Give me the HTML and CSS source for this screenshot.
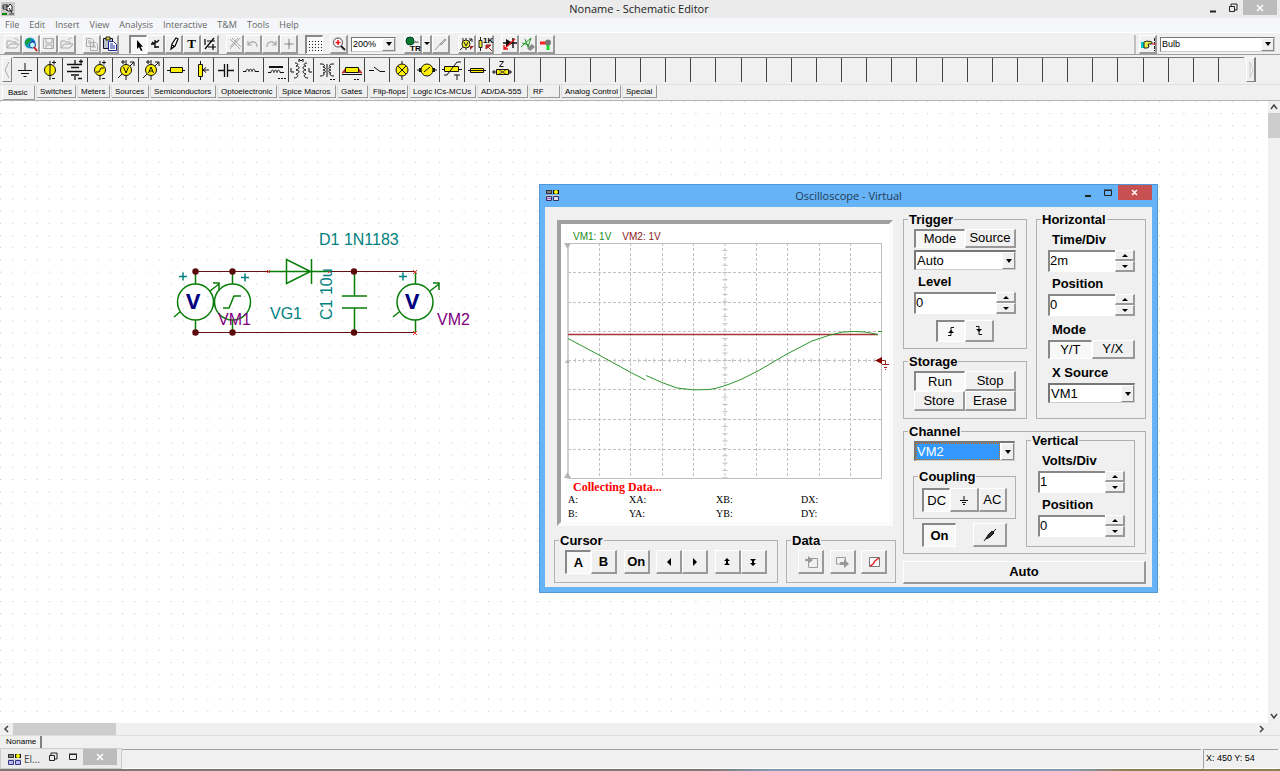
FILE: index.html
```html
<!DOCTYPE html>
<html lang="en">
<head>
<meta charset="utf-8">
<title>Noname - Schematic Editor</title>
<link rel="stylesheet" href="styles.css">
</head>
<body>
<header class="titlebar">
  <svg class="app-icon" width="14" height="14" viewBox="0 0 14 14"><rect width="14" height="14" fill="#c8c8c8"/><path d="M2 3h3l2 2 2-3 2 2v5H7L5 7H2z" fill="#fff" stroke="#222"/><path d="M6 2v7M2 5h4M8 6l3 5" stroke="#222"/><path d="M1 12h5" stroke="#080" stroke-width="2"/><path d="M8 12h5" stroke="#333"/></svg>
  <h1>Noname - Schematic Editor</h1>
  <div class="caption-buttons">
    <button aria-label="Minimize"><svg width="10" height="10"><path d="M2 8.500h6" stroke="#222" stroke-width="2"/></svg></button>
    <button aria-label="Restore"><svg width="10" height="10"><path d="M3 3V1h6v6H7M1.500 3.500h5v5h-5z" fill="none" stroke="#222"/></svg></button>
    <button class="close" aria-label="Close"><svg width="10" height="10"><path d="M2 2l6 6M8 2l-6 6" stroke="#fff" stroke-width="1.500"/></svg></button>
  </div>
</header>
<nav class="menu">
  <button>File</button><button>Edit</button><button>Insert</button><button>View</button><button>Analysis</button><button>Interactive</button><button>T&amp;M</button><button>Tools</button><button>Help</button>
</nav>
<div class="toolbar">
  <div class="group">
    <button aria-label="Open"><svg viewBox="0 0 18 18"><path d="M3 13V6h4l1 1h4v2M3 13l3-4h9l-3 4zM10 4c2-1 3-1 4 2" fill="none" stroke="#aaa"/></svg></button>
    <button aria-label="Open from web"><svg viewBox="0 0 18 18"><circle cx="8" cy="8" r="5.500" fill="#18a0c8"/><path d="M4 5l4-2 1 3-3 2-1 3-2-3z" fill="#16a030"/><path d="M9 4l4 3-2 3z" fill="#2040c0"/><circle cx="10.500" cy="10" r="3" fill="#bff" stroke="#123a9a"/><path d="M12 12l3 4" stroke="#c22" stroke-width="2"/></svg></button>
    <button aria-label="Save"><svg viewBox="0 0 18 18"><path d="M3.500 3.500h10v10h-10zM6 4v4h6V4M6 13v-3h6v3" fill="none" stroke="#aaa"/></svg></button>
    <button aria-label="Close file"><svg viewBox="0 0 18 18"><path d="M3 13V6h4l1 1h4v2M3 13l3-4h9l-3 4zM10 5c2-3 3-1 4-2" fill="none" stroke="#aaa"/></svg></button>
  </div>
  <div class="group">
    <button aria-label="Copy"><svg viewBox="0 0 18 18"><path d="M3.500 3.500h5l2 2v6h-7zM7.500 7.500h5l2 2v6h-7zM5 6h3M5 8h2M9 10h3M9 12h4" fill="none" stroke="#aaa"/></svg></button>
    <button aria-label="Paste"><svg viewBox="0 0 18 18"><path d="M2.500 3.500h9v10h-9z" fill="#b8c0c8" stroke="#112"/><path d="M5 2h4v3H5z" fill="#dd3" stroke="#222"/><path d="M7.500 6.500h5l3 3v6h-8z" fill="#fff" stroke="#1a2a9a"/><path d="M9 9h3M9 11h5M9 13h5" stroke="#1a2a9a"/></svg></button>
  </div>
  <div class="group tools">
    <button class="pressed" aria-label="Select"><svg viewBox="0 0 18 18"><path d="M7 4v9l2-2 2 4 1.500-.7-2-3.500H13z"/></svg></button>
    <button aria-label="Wire node"><svg viewBox="0 0 18 18"><path d="M8 5v8M4 9h3M8 7h2l2-2M8 12h4M5 7l3 2" fill="none" stroke="#000" stroke-width="1.300"/></svg></button>
    <button aria-label="Draw wire"><svg viewBox="0 0 18 18"><path d="M6 14l1-5 4-6 2 1-3 7zM7 10l2 1" fill="#fff" stroke="#000" stroke-width="1.200"/></svg></button>
    <button aria-label="Text"><b class="glyph">T</b></button>
    <button aria-label="Hide values"><svg viewBox="0 0 18 18"><path d="M4 14L13 3M4 4v6M6 6h8M7 12h8M12 9v6" fill="none" stroke="#000" stroke-width="1.200"/></svg></button>
  </div>
  <div class="group">
    <button aria-label="Delete"><svg viewBox="0 0 18 18"><path d="M4 4l10 10M6 3l9 9M14 3L4 14M12 3l-8 9" stroke="#aaa"/></svg></button>
    <button aria-label="Undo"><svg viewBox="0 0 18 18"><path d="M4 6v4h4M4 10c3-5 9-4 9 2" fill="none" stroke="#aaa" stroke-width="1.200"/></svg></button>
    <button aria-label="Redo"><svg viewBox="0 0 18 18"><path d="M14 6v4h-4M14 10c-3-5-9-4-9 2" fill="none" stroke="#aaa" stroke-width="1.200"/></svg></button>
    <button aria-label="Move"><svg viewBox="0 0 18 18"><path d="M9 4v10M4 9h10" stroke="#999" stroke-width="1.200"/><circle cx="9" cy="9" r="1.600" fill="#999"/></svg></button>
  </div>
  <div class="group">
    <button class="pressed" aria-label="Grid"><svg viewBox="0 0 18 18"><path d="M3 5.500h13M3 8.500h13M3 11.500h13M3 14.500h13" stroke="#222" stroke-dasharray="1 2"/></svg></button>
  </div>
  <div class="group">
    <button aria-label="Zoom"><svg viewBox="0 0 18 18"><circle cx="8" cy="7.500" r="4.500" fill="#fff" stroke="#444"/><path d="M5.500 7.500h5M8 5v5" stroke="#e11" stroke-width="1.500"/><path d="M11 11l4 4" stroke="#222" stroke-width="2"/></svg></button>
    <div class="combo zoom-level"><select aria-label="Zoom level"><option>200%</option></select><span class="drop"></span></div>
  </div>
  <div class="group runs">
    <button aria-label="Transient"><svg viewBox="0 0 18 18"><circle cx="6" cy="6" r="4" fill="#0a7a2a" stroke="#043"/><path d="M10 8c1-2 2-2 2 0 1-2 2-2 2 0" fill="none" stroke="#555"/><text x="6" y="16" class="tiny">TR</text></svg></button>
    <button class="slim" aria-label="Run options"><span class="tri"></span></button>
    <button aria-label="Probe"><svg viewBox="0 0 18 18"><path d="M3 15l5-6M8 9l5-5 1 1-5 5z" fill="#ccc" stroke="#999"/></svg></button>
  </div>
  <div class="group runs">
    <button aria-label="Meter"><svg viewBox="0 0 18 18"><path d="M2 15L14 4M11 4h3v3M8 3v12M5 3v3" fill="none" stroke="#222"/><circle cx="8" cy="9" r="4" fill="#ee3" stroke="#222"/><path d="M6 7l2 4 2-4" fill="none" stroke="#222"/><path d="M12 11h4l-4 4z" fill="#a22"/></svg></button>
    <button aria-label="Component value"><svg viewBox="0 0 18 18"><path d="M4.500 2v14" stroke="#222"/><path d="M3 5.500h3v7H3z" fill="#ee3" stroke="#222"/><text x="7" y="8" class="tiny">1K</text><path d="M10 10h5l-5 4zM12 12l4 4" fill="#a22" stroke="#a22"/></svg></button>
  </div>
  <div class="group">
    <button aria-label="Diode tool"><svg viewBox="0 0 18 18"><path d="M2 8h14M12 3v10" stroke="#111" stroke-width="1.500"/><path d="M5 4l7 4-7 4z" fill="#111"/><path d="M14 4L3 14M3 10v4h4" stroke="#e11" fill="none" stroke-width="1.300"/></svg></button>
    <button aria-label="Check"><svg viewBox="0 0 18 18"><path d="M2 12l10-9M3 8l7 2M6 4l3 8M12 3l-3 9" stroke="#292"/><path d="M8 13l5-4 3 3-5 4z" fill="#888"/></svg></button>
    <button aria-label="Pin"><svg viewBox="0 0 18 18"><path d="M3 8h6" stroke="#f22" stroke-width="3"/><path d="M11 9v6" stroke="#1d2" stroke-width="3"/><circle cx="11" cy="7.500" r="3" fill="#777"/></svg></button>
  </div>
  <div class="group find">
    <button aria-label="Find component"><svg viewBox="0 0 18 18"><path d="M2 7h3v6H2z" fill="#0cc"/><path d="M5 7l3-1 5 1v2H9l1 3-2 1H5z" fill="#ee4" stroke="#222"/><path d="M15.500 3v13" stroke="#222" stroke-dasharray="3 1"/><path d="M13 9h4" stroke="#e22"/></svg></button>
    <div class="combo part-name"><select aria-label="Component"><option>Bulb</option></select><span class="drop"></span></div>
  </div>
</div>
<div class="palette">
  <button class="arrow" aria-label="Scroll left"><svg width="8" height="24"><path d="M6 4L2 12l4 8" fill="none" stroke="#aaa"/></svg></button>
  <div class="cells">
    <button aria-label="Ground"><svg viewBox="0 0 24 24"><path d="M12 5v7M5 12.500h14M8 15.500h8M10.500 18.500h3" stroke="#111" fill="none"/></svg></button>
    <button aria-label="Battery source"><svg viewBox="0 0 24 24"><path d="M12 3v19M14 4.500h4M16 2.500v4M14 20.500h3" stroke="#111"/><circle cx="12" cy="12" r="5.500" fill="#ffef00" stroke="#111"/><path d="M12 6v12" stroke="#111"/></svg></button>
    <button aria-label="Battery"><svg viewBox="0 0 24 24"><path d="M12 2v4M12 18v4M4 6.500h15M8 9.500h8M4 13.500h15M8 17h8M15 20.500h4M16 3.500h4M18 1.500v4" stroke="#111" stroke-width="1.300"/></svg></button>
    <button aria-label="Voltage generator"><svg viewBox="0 0 24 24"><path d="M12 3v19M14 4.500h4M16 2.500v4M14 20.500h3" stroke="#111"/><circle cx="12" cy="12" r="5.500" fill="#ffef00" stroke="#111"/><path d="M8 14h3l2-4h3" stroke="#111" fill="none"/></svg></button>
    <button aria-label="Voltmeter"><svg viewBox="0 0 24 24"><path d="M12 2v20M4 20L20 4M16 4h4v4M7 4h4M9 2v4" stroke="#111" fill="none"/><circle cx="12" cy="12" r="5.500" fill="#ffef00" stroke="#111"/><path d="M9.500 9l2.500 6 2.500-6" stroke="#111" fill="none"/></svg></button>
    <button aria-label="Ammeter"><svg viewBox="0 0 24 24"><path d="M12 2v20M4 20L20 4M16 4h4v4M7 4h4M9 2v4" stroke="#111" fill="none"/><circle cx="12" cy="12" r="5.500" fill="#ffef00" stroke="#111"/><path d="M9.500 15l2.500-6 2.500 6M10 13h4" stroke="#111" fill="none"/></svg></button>
    <button aria-label="Resistor"><svg viewBox="0 0 24 24"><path d="M3 12.500h18" stroke="#111"/><path d="M6.500 9.500h12v5h-12z" fill="#ffef00" stroke="#111"/></svg></button>
    <button aria-label="Potentiometer"><svg viewBox="0 0 24 24"><path d="M11.500 3v19M14 12h6M17 9.500l-3 2.500 3 2.500" stroke="#111" fill="none"/><path d="M9.500 6.500h4v12h-4z" fill="#ffef00" stroke="#111"/></svg></button>
    <button aria-label="Capacitor"><svg viewBox="0 0 24 24"><path d="M4 12.500h6M14 12.500h6M10.500 6v13M13.500 6v13" stroke="#111" stroke-width="1.300"/></svg></button>
    <button aria-label="Inductor"><svg viewBox="0 0 24 24"><path d="M4 13.500h3c0-3 3-3 3 0 0-3 3-3 3 0 0-3 3-3 3 0h4" stroke="#111" fill="none"/></svg></button>
    <button aria-label="Core inductor"><svg viewBox="0 0 24 24"><path d="M5 9h14" stroke="#111" stroke-width="2"/><path d="M4 14.500h3c0-3 3-3 3 0 0-3 3-3 3 0 0-3 3-3 3 0h4M14 20.500h2M17 20.500h2M20 20.500h2" stroke="#111" fill="none"/></svg></button>
    <button aria-label="Coupled inductors"><svg viewBox="0 0 24 24"><path d="M6 5c3 0 4 2 1 3 4 0 4 3 0 4 4 0 4 3 0 4 3 1 2 4-2 4M18 5c-3 0-4 2-1 3-4 0-4 3 0 4-4 0-4 3 0 4-3 1-2 4 2 4M2 10v4h3M20 10v4h3M10 4V1l2 2 2-2v3" stroke="#111" fill="none"/></svg></button>
    <button aria-label="Transformer"><svg viewBox="0 0 24 24"><path d="M5 6h2c3 0 3 3 1 3 3 0 3 3 0 3 3 0 3 3 0 3 2 0 2 3-3 3M19 6h-2c-3 0-3 3-1 3-3 0-3 3 0 3-3 0-3 3 0 3-2 0-2 3 3 3M12 6v13M15 21.500h2M18 21.500h2" stroke="#111" fill="none"/></svg></button>
    <button aria-label="Line"><svg viewBox="0 0 24 24"><path d="M2 15l4-5v4zM22 15l-4-5v4z" fill="#c22" stroke="#c22"/><path d="M5.500 9.500h13v5h-13z" fill="#ffef00" stroke="#111"/><path d="M2 16.500h20M14 21.500h2M17 21.500h2" stroke="#111"/></svg></button>
    <button aria-label="Switch"><svg viewBox="0 0 24 24"><path d="M4 12.500h5M9 9l6 4.500h5" stroke="#111" fill="none"/></svg></button>
    <button aria-label="Lamp"><svg viewBox="0 0 24 24"><path d="M12 3v19" stroke="#111"/><circle cx="12" cy="12" r="6" fill="#ffef00" stroke="#111"/><path d="M8 8l8 8M16 8l-8 8" stroke="#111"/></svg></button>
    <button aria-label="Motor"><svg viewBox="0 0 24 24"><path d="M2 12h20" stroke="#111"/><path d="M4 10h16v4H4z" fill="#111"/><circle cx="12" cy="12" r="6" fill="#ffef00" stroke="#111"/><path d="M9 14l6-5" stroke="#111"/></svg></button>
    <button aria-label="Thermistor"><svg viewBox="0 0 24 24"><path d="M2 11.500h20" stroke="#111"/><path d="M4.500 8.500h14v5h-14z" fill="#ffef00" stroke="#111"/><path d="M4 17h3L17 4h4M14 17h6M17 17v5" stroke="#111" fill="none"/></svg></button>
    <button aria-label="Fuse"><svg viewBox="0 0 24 24"><path d="M5.500 10.500h13v4h-13z" fill="#ffef00" stroke="#111"/><path d="M3 12.500h18" stroke="#111"/></svg></button>
    <button aria-label="Impedance"><svg viewBox="0 0 24 24"><path d="M9.500 3.500h4l-4 5h4" stroke="#111" fill="none"/><path d="M2 14h20M4 12v4M20 12v4" stroke="#111"/><path d="M6.500 11.500h12v5h-12z" fill="#ffef00" stroke="#111"/><path d="M9 12l7 4M16 12l-7 4" stroke="#553"/></svg></button>
    <i></i><i></i><i></i><i></i><i></i><i></i><i></i><i></i><i></i><i></i><i></i><i></i><i></i><i></i><i></i><i></i><i></i><i></i><i></i><i></i><i></i><i></i><i></i><i></i><i></i><i></i><i></i><i></i><i></i>
  </div>
  <button class="arrow right" aria-label="Scroll right"><svg width="8" height="24"><path d="M3 4v16l3-8z" fill="none" stroke="#ccc"/></svg></button>
</div>
<div class="tabs">
  <button class="current">Basic</button><button>Switches</button><button>Meters</button><button>Sources</button><button>Semiconductors</button><button>Optoelectronic</button><button>Spice Macros</button><button>Gates</button><button>Flip-flops</button><button>Logic ICs-MCUs</button><button>AD/DA-555</button><button>RF</button><button>Analog Control</button><button>Special</button>
</div>
<main class="workspace">
  <div class="canvas">
    <svg class="schematic" width="100%" height="100%">
      <defs><pattern id="dots" x="0" y="12" width="12.200" height="12.200" patternUnits="userSpaceOnUse"><rect width="1" height="1" fill="#c4c4c4"/></pattern></defs>
      <rect width="100%" height="100%" fill="url(#dots)"/>
      <g transform="translate(0 -101)">
        <path d="M195 271.500h73M331 271.500h84M195 332.500h220" stroke="#611"/>
        <g fill="none" stroke="#087d08" stroke-width="1.500">
          <path d="M268 271.500h63M286.500 259.500v24l24-12zM311.500 259v25"/>
          <path d="M195.500 271v13M195.500 320v12M232.500 271v13M232.500 320v12M415.500 271v13M415.500 320v12M354.500 271v25M354.500 308v24M342 296h25M342 308h25"/>
          <circle cx="195.500" cy="302" r="18"/><circle cx="232.500" cy="302" r="18"/><circle cx="415" cy="302" r="18"/>
          <path d="M223 308h6l5-12h7M210 291l9-7M213 283h6v7M174 317l6-5M430 291l9-7M433 283h6v7M393 317l6-5"/>
        </g>
        <g fill="#5a0a0a"><circle cx="195.500" cy="271.500" r="3.200"/><circle cx="232.500" cy="271.500" r="3.200"/><circle cx="354" cy="271.500" r="3.200"/><circle cx="195.500" cy="332.500" r="3.200"/><circle cx="232.500" cy="332.500" r="3.200"/><circle cx="354" cy="332.500" r="3.200"/></g>
        <path d="M267 270l3 3m0-3l-3 3M328 270l3 3m0-3l-3 3M413 270l4 4m0-4l-4 4M413 331l4 4m0-4l-4 4" stroke="#e33"/>
        <path d="M179 276.500h8M183 272.500v8M241 277.500h8M245 273.500v8M399 276.500h8M403 272.500v8" stroke="#008080" stroke-width="1.500"/>
        <g class="ref"><text x="319" y="245">D1 1N1183</text><text x="270" y="319">VG1</text><text transform="translate(332 320) rotate(-90)">C1 10u</text></g>
        <g class="meter"><text x="218" y="325">VM1</text><text x="437" y="325">VM2</text></g>
        <g class="vee"><text x="186" y="309">V</text><text x="405" y="309">V</text></g>
      </g>
    </svg>

    <section class="scope" aria-label="Oscilloscope">
      <div class="scope-title">
        <svg width="13" height="12"><path d="M0 1h6v4H0z" fill="#333"/><path d="M7 1h6v4H7z" fill="#111"/><circle cx="10" cy="3" r="2" fill="#ff0"/><path d="M1 3h4M0 6.500h13" stroke="#ccc"/><path d="M.500 7.500h5v4h-5zM7.500 7.500h5v4h-5z" fill="#dde" stroke="#336"/><path d="M1 10l2-1 2 1" fill="none" stroke="#a3a"/></svg>
        <h2>Oscilloscope - Virtual</h2>
        <div class="caption-buttons">
          <button aria-label="Minimize"><svg width="10" height="10"><path d="M2 8h6" stroke="#222" stroke-width="2"/></svg></button>
          <button aria-label="Maximize"><svg width="10" height="10"><path d="M1.500 2.500h7v5h-7zM1 2h8" fill="none" stroke="#222"/></svg></button>
          <button class="close red" aria-label="Close"><svg width="10" height="10"><path d="M2 2l5 5M7 2L2 7" stroke="#fff" stroke-width="1.500"/></svg></button>
        </div>
      </div>
      <div class="scope-body">
        <div class="left">
          <div class="screen">
            <div class="traces"><span class="green">VM1: 1V</span><span class="maroon">VM2: 1V</span></div>
            <svg class="plot" viewBox="561 243 328 239">
              <g fill="none" stroke="#c0c0c0">
                <path d="M567.500 478.500h314M881.500 243v236M568 243.500h314"/><path d="M568 243v236" stroke-width="2" stroke="#d0d0d0"/>
                <path stroke-dasharray="3 2" d="M599.500 243v235M630.500 243v235M662.500 243v235M693.500 243v235M725 243v235M756.500 243v235M787.500 243v235M819.500 243v235M850.500 243v235M568 272.500h314M568 302.500h314M568 331.500h314M568 360.500h314M568 389.500h314M568 419.500h314M568 449.500h314"/>
                <path stroke-width="5" stroke-dasharray="1 6.330" d="M725 250v228"/><path stroke-width="4" stroke-dasharray="1 6.860" d="M575 360.500h306"/>
              </g>
              <path d="M564 243h7l-3.500 6zM564 478h7l-3.500-6zM565 363h5l-2.500-4z" fill="#b4b4b4"/>
              <path d="M568 334.500h310" stroke="#a33" stroke-width="1.500"/>
              <path d="M568 338.500L599 355l31 17 15.500 8M646 375.500l16 7 15 5.500q17 3 32 1.500 11-1 33-10.500 17-8 33-18l12-7 25-13 18-6 13-3q12-1 22 0l13 2.500M878 331.500h4" fill="none" stroke="#2b962b"/>
              <path d="M882 357v7l-7-3.500z" fill="#800"/><path d="M882 360.500h3.500v4M882 364.500h7M884 367.500h3M885 369.500h1" fill="none" stroke="#922"/>
            </svg>
            <p class="collecting">Collecting Data...</p>
            <div class="readout"><span>A:</span><span>XA:</span><span>XB:</span><span>DX:</span><span>B:</span><span>YA:</span><span>YB:</span><span>DY:</span></div>
          </div>
          <div class="bottom-row">
            <fieldset class="cursor"><legend>Cursor</legend>
              <div class="btns bold">
                <div class="pair"><button class="pressed">A</button><button>B</button></div>
                <button>On</button>
                <div class="pair"><button aria-label="Left"><svg width="10" height="10"><path d="M7 1v8L3 5z"/></svg></button><button aria-label="Right"><svg width="10" height="10"><path d="M3 1v8l4-4z"/></svg></button></div>
                <div class="pair"><button aria-label="Up"><svg width="10" height="10"><path d="M5 1l3 3H2zM5 5l3 3H2zM4 4h2v2H4z"/></svg></button><button aria-label="Down"><svg width="10" height="10"><path d="M5 5L2 2h6zM5 9L2 6h6zM4 4h2v2H4z"/></svg></button></div>
              </div>
            </fieldset>
            <fieldset class="data"><legend>Data</legend>
              <div class="btns">
                <button aria-label="Import"><svg width="16" height="16"><path d="M5.500 4.500h9v9h-9" fill="none" stroke="#999"/><path d="M5.500 8v5" stroke="#999"/><path d="M2 5h3V2l5 4-5 4V7H2z" fill="#999"/></svg></button>
                <button aria-label="Export"><svg width="16" height="16"><path d="M10 10H2.500V3.500h9V7" fill="none" stroke="#999"/><path d="M6 8h4V5l5 5-5 4v-3H6z" fill="#999"/></svg></button>
                <button aria-label="Curve"><svg width="16" height="16"><path d="M3.500 3.500h10v9h-10z" fill="#fff" stroke="#777"/><path d="M4 12c3-1 4-3 5-5l4-3" fill="none" stroke="#e22" stroke-width="1.500"/></svg></button>
              </div>
            </fieldset>
          </div>
        </div>
        <div class="right">
          <div class="upper">
            <div class="stack">
              <fieldset class="trigger"><legend>Trigger</legend>
                <div class="pair wide"><button class="pressed">Mode</button><button>Source</button></div>
                <div class="combo"><select aria-label="Trigger mode"><option>Auto</option></select><span class="drop"></span></div>
                <label for="level">Level</label>
                <div class="spin"><input id="level" value="0"><div><button aria-label="Level up"><span class="tri up"></span></button><button aria-label="Level down"><span class="tri"></span></button></div></div>
                <div class="pair edges"><button class="pressed" aria-label="Rising edge"><svg width="10" height="11"><path d="M2 9.500h3V1.500h3" fill="none" stroke="#111"/><path d="M2 7l3-3 3 3z"/></svg></button><button aria-label="Falling edge"><svg width="10" height="11"><path d="M2 1.500h3v8h3" fill="none" stroke="#111"/><path d="M2 4h6L5 7z"/></svg></button></div>
              </fieldset>
              <fieldset class="storage"><legend>Storage</legend>
                <div class="quad"><button class="pressed">Run</button><button>Stop</button><button>Store</button><button>Erase</button></div>
              </fieldset>
            </div>
            <fieldset class="horizontal"><legend>Horizontal</legend>
              <label for="time">Time/Div</label>
              <div class="spin"><input id="time" value="2m"><div><button aria-label="Time up"><span class="tri up"></span></button><button aria-label="Time down"><span class="tri"></span></button></div></div>
              <label for="hpos">Position</label>
              <div class="spin"><input id="hpos" value="0"><div><button aria-label="Position up"><span class="tri up"></span></button><button aria-label="Position down"><span class="tri"></span></button></div></div>
              <h3>Mode</h3>
              <div class="pair wide"><button class="pressed">Y/T</button><button>Y/X</button></div>
              <label class="spaced" for="xsrc">X Source</label>
              <div class="combo"><select id="xsrc"><option>VM1</option></select><span class="drop"></span></div>
            </fieldset>
          </div>
          <fieldset class="channel"><legend>Channel</legend>
            <div class="channel-cols">
              <div class="channel-left">
                <div class="combo selected"><select aria-label="Channel"><option>VM2</option></select><span class="drop"></span></div>
                <fieldset class="coupling"><legend>Coupling</legend>
                  <div class="pair"><button class="pressed">DC</button><button aria-label="Ground"><svg width="12" height="12"><path d="M6 2v4M2 6.500h8M4 8.500h4M5 10.500h2" stroke="#111"/></svg></button><button>AC</button></div>
                </fieldset>
                <div class="onrow"><button class="pressed on">On</button><button aria-label="Probe"><svg width="16" height="16"><path d="M2 14l3-4" stroke="#111"/><path d="M4 12l2-4 4-4 2 2-4 4zM11 5l3-3" stroke="#111" fill="#333"/></svg></button></div>
              </div>
              <fieldset class="vertical"><legend>Vertical</legend>
                <label for="volts">Volts/Div</label>
                <div class="spin"><input id="volts" value="1"><div><button aria-label="Volts up"><span class="tri up"></span></button><button aria-label="Volts down"><span class="tri"></span></button></div></div>
                <label for="vpos">Position</label>
                <div class="spin"><input id="vpos" value="0"><div><button aria-label="Position up"><span class="tri up"></span></button><button aria-label="Position down"><span class="tri"></span></button></div></div>
              </fieldset>
            </div>
          </fieldset>
          <button class="auto">Auto</button>
        </div>
      </div>
    </section>
  </div>
  <div class="vscroll"><svg width="12" height="12"><path d="M3 8l3-4 3 4" fill="none" stroke="#444" stroke-width="1.500"/></svg><span class="thumb"></span><svg width="12" height="12"><path d="M3 3l3 4 3-4" fill="none" stroke="#444" stroke-width="1.500"/></svg></div>
  <div class="hscroll"><svg width="13" height="12"><path d="M8 3L5 6l3 3" fill="none" stroke="#444" stroke-width="1.500"/></svg><span class="thumb"></span><svg width="13" height="12"><path d="M5 3l3 3-3 3" fill="none" stroke="#444" stroke-width="1.500"/></svg></div>
</main>
<div class="doc-tabs"><button>Noname</button></div>
<footer class="status"><span class="pane"></span><span class="coords">X: 450 Y: 54</span></footer>
<div class="edge"></div>
<div class="mini">
  <svg width="13" height="12"><path d="M0 1h6v4H0z" fill="#333"/><path d="M7 1h6v4H7z" fill="#111"/><circle cx="10" cy="3" r="2" fill="#ff0"/><path d="M1 3h4M0 6.500h13" stroke="#ccc"/><path d="M.500 7.500h5v4h-5zM7.500 7.500h5v4h-5z" fill="#bbe" stroke="#338"/></svg>
  <span class="mini-name">El...</span>
  <button aria-label="Restore"><svg width="10" height="10"><path d="M3 3V1h6v6H7M1.500 3.500h5v5h-5z" fill="none" stroke="#222"/></svg></button>
  <button aria-label="Maximize"><svg width="10" height="10"><path d="M1.500 2.500h7v5h-7zM1 2h8" fill="none" stroke="#222"/></svg></button>
  <button class="close" aria-label="Close"><svg width="10" height="10"><path d="M2 2l6 6M8 2l-6 6" stroke="#fff" stroke-width="1.500"/></svg></button>
</div>
</body>
</html>
```
FILE: styles.css
```css
* { box-sizing: border-box; }
body { margin: 0; height: 100vh; display: flex; flex-direction: column; overflow: hidden; background: #f0f0f0; color: #000; font: 9px/12px "Liberation Sans", Arial, sans-serif; position: relative; }
button, select, input { font: inherit; color: inherit; margin: 0; padding: 0; border-radius: 0; }
button { display: flex; align-items: center; justify-content: center; background: #f0f0f0; border: 1px solid; border-color: #fff #808080 #808080 #fff; }
svg { display: block; flex: none; }
h1, h2, h3, p { margin: 0; }
fieldset { --pad: 0px; margin: 0; padding: 0; min-width: 0; border: 1px solid #b0b0b0; }
legend { margin-left: calc(4px - var(--pad)); padding: 0 1px; font-weight: bold; line-height: 13px; }
.pressed { background: #f8f8f8; border-color: #808080 #fff #fff #808080; }

.titlebar { display: flex; align-items: flex-start; height: 18px; background: #ebebeb; }
.app-icon { margin: 2px 0 0 1px; }
.titlebar h1 { flex: 1; text-align: center; padding-left: 60px; font: 11px/17px "Open Sans", "Noto Sans", sans-serif; color: #222; }
.caption-buttons { display: flex; }
.caption-buttons button { width: 20px; height: 15px; border: 0; background: none; }
.caption-buttons .close { width: 34px; background: #bcbcbc; margin-right: 3px; }

.menu { display: flex; gap: 10px; height: 14px; padding-left: 5px; background: #f4f6f9; }
.menu button { border: 0; background: none; font: 9px/14px "Open Sans", "Noto Sans", sans-serif; color: #666; }

.toolbar { display: flex; align-items: center; gap: 7px; height: 23px; padding: 1px 5px 0 4px; border-top: 1px solid #fff; border-bottom: 1px solid #a0a0a0; }
.group { display: flex; align-items: center; }
.group button { width: 18px; height: 19px; border-width: 1px 2px 2px 1px; border-color: #fff #999 #999 #fff; }
.group button.pressed { border-width: 2px 1px 1px 2px; border-color: #888 #fff #fff #888; }
.group button svg { width: 18px; height: 18px; }
.group.tools { margin-left: 3px; }
.group.runs { margin-left: 1px; }
.group button.slim { width: 10px; }
.glyph { font: bold 13px/14px "Liberation Serif", serif; }
.tiny { font: bold 8px "Liberation Sans", sans-serif; }
.find { margin-left: auto; padding-left: 3px; border-left: 2px solid #c0c0c0; gap: 3px; }
.combo { display: grid; background: #fff; border: 1px solid; border-color: #777 #ccc #ccc #777; }
.combo > * { grid-area: 1 / 1; }
.combo select { width: 100%; min-width: 0; border: 0; background: transparent; appearance: none; padding: 0 0 0 1px; }
.drop { justify-self: end; width: 13px; background: #f0f0f0; border: 1px solid; border-color: #fff #888 #888 #fff; pointer-events: none; display: flex; align-items: center; justify-content: center; }
.drop::after { content: ""; border: 3px solid transparent; border-top: 4px solid #000; border-bottom: 0; }
.zoom-level { width: 45px; height: 15px; margin-left: 3px; }
.part-name { width: 115px; height: 15px; }
.tri { border: 3px solid transparent; border-top: 3px solid #000; border-bottom: 0; }
.tri.up { border-top: 0; border-bottom: 3px solid #000; }

.palette { display: flex; height: 29px; padding: 2px 24px 2px 2px; }
.palette .arrow { width: 10px; }
.palette .right { margin-left: 2px; border-right-width: 2px; }
.cells { flex: 1; display: grid; grid-template-columns: repeat(49, 1fr); margin-left: 1px; border-top: 1px solid #777; }
.cells > * { border: 0; border-right: 1px solid #444; }
.cells > :last-child { border-right: 0; }
.cells svg { width: 24px; height: 24px; }

.tabs { display: grid; grid-template-columns: 33px 40px 33px 38px 66px 60px 58px 31px 39px 67px 51px 31px 60px 35px; column-gap: 1px; align-items: start; height: 17px; padding-left: 2px; border-bottom: 1px solid #b4b4b4; border-top: 1px solid #e0e0e0; font-size: 8px; }
.tabs button { justify-content: flex-start; padding-left: 3px; height: 13px; border: 1px solid; border-color: transparent #999 #999 #ddd; border-bottom-left-radius: 2px; line-height: 11px; white-space: nowrap; }
.tabs .current { height: 15px; padding-left: 5px; border-left-color: #fff; }

.workspace { flex: 1; min-height: 0; display: grid; grid-template: 1fr 12px / 1fr 12px; }
.canvas { position: relative; overflow: hidden; background: #fff; }
.ref, .meter { font-family: "Liberation Sans", Arial, sans-serif; font-size: 16px; fill: #008080; }
.meter { fill: #800080; }
.vee { font: bold 22px "Open Sans", "Liberation Sans", sans-serif; fill: #000080; }
.vscroll { display: flex; flex-direction: column; }
.vscroll .thumb { height: 25px; margin-bottom: auto; background: #cdcdcd; }
.hscroll { display: flex; }
.hscroll .thumb { width: 103px; margin-right: auto; background: #cdcdcd; }
.doc-tabs { height: 14px; border-top: 1px solid #ddd; font-size: 8px; }
.doc-tabs button { height: 12px; padding: 0 4px 0 6px; border-width: 0 2px 0 0; }
.status { display: flex; gap: 2px; height: 20px; padding-right: 2px; }
.status span { border-top: 1px solid #a0a0a0; border-bottom: 1px solid #fff; }
.pane { flex: 1; }
.status .coords { width: 75px; padding-left: 2px; border-left: 1px solid #a0a0a0; line-height: 17px; white-space: nowrap; }
.edge { height: 2px; background: linear-gradient(90deg, #7c7770 0 55%, #8496b0 60% 84%, #8c8050 88%); }
.mini { position: absolute; left: 0; bottom: 2px; width: 122px; height: 21px; display: flex; align-items: flex-start; padding: 0 4px 0 7px; background: #ececec; border: 1px solid #ccc; }
.mini > svg { margin-top: 4px; }
.mini-name { flex: 1; padding-left: 3px; font: 10px/21px "Open Sans", sans-serif; color: #444; }
.mini button { width: 20px; height: 16px; border: 0; background: none; }
.mini .close { width: 34px; background: #bcbcbc; }

.scope { position: absolute; left: 539px; top: 83px; width: 619px; padding: 0 6px 6px; background: #66b3f7; box-shadow: inset 0 0 0 1px #5298d8; font: 13px/16px "Liberation Sans", Arial, sans-serif; }
.scope-title { display: flex; align-items: flex-start; height: 23px; }
.scope-title > svg { margin: 5px 0 0 1px; }
.scope-title h2 { flex: 1; text-align: center; padding-left: 60px; font: 11px/23px "Open Sans", "Noto Sans", sans-serif; color: #233c55; }
.scope-title .caption-buttons { padding-top: 1px; }
.scope-title .close.red { background: #c75050; margin: 0; }
.scope-body { display: grid; grid-template-columns: 1fr 243px; gap: 7px; padding: 6px 6px 3px 9px; background: #f0f0f0; }
.screen { margin: 7px 3px 8px; background: #fff; border: 4px solid; border-color: #a0a0a0 #fbfbfb #fbfbfb #a0a0a0; height: 306px; }
.traces { display: flex; gap: 11px; height: 19px; padding: 5px 0 0 12px; font-size: 10px; }
.green { color: #228b22; }
.maroon { color: #8b1a1a; }
.plot { width: 100%; height: auto; }
.collecting { padding-left: 12px; font: bold 12px/11px "Liberation Serif", serif; color: #f00; }
.readout { display: grid; grid-template-columns: 61px 87px 85px 1fr; padding-left: 7px; font: 10px/14px "Liberation Serif", serif; }
.bottom-row { display: grid; grid-template-columns: 224px 110px; gap: 8px; }
.btns { display: flex; justify-content: space-between; padding: 3px 10px 8px; }
.data .btns { padding-left: 11px; padding-right: 8px; }
.scope-body button { border-width: 1px 2px 2px 1px; border-color: #fff #999 #999 #fff; height: 24px; min-width: 26px; }
.scope-body button.pressed { border-width: 2px 1px 1px 2px; border-color: #888 #fff #fff #888; }
.bold { font-weight: bold; }
.pair { display: flex; }
.upper { display: grid; grid-template-columns: 124px 110px; gap: 9px; }
.stack { display: grid; gap: 6px; }
.trigger { --pad: 10px; padding: 3px var(--pad) 6px; }
.scope-body .wide button { flex: 1; height: 19px; }
.scope-body .combo { height: 20px; border-width: 2px 1px 1px 2px; }
.trigger .combo { margin: 2px 0 0; }
.trigger label { margin-top: 5px; }
.scope label, .scope h3 { display: block; margin: 4px 0 2px 4px; font-size: 13px; font-weight: bold; line-height: 16px; }
.scope .spaced, .scope h3 { margin-top: 6px; }
.spin { display: flex; height: 22px; }
.spin input { flex: 1; min-width: 0; padding-bottom: 2px; border: 1px solid; border-width: 2px 0 1px 2px; border-color: #888 #fff #fff #888; background: #fff; }
.spin > div { width: 20px; }
.scope-body .spin button { width: 20px; min-width: 0; height: 11px; }
.edges { justify-content: center; margin-top: 6px; }
.scope-body .edges button { width: 29px; height: 22px; }
.storage { --pad: 10px; padding: 3px var(--pad) 7px; }
.quad { display: grid; grid-template-columns: 1fr 1fr; }
.scope-body .quad button { height: 20px; }
.horizontal { --pad: 11px; padding: 2px 10px 0 var(--pad); }
.channel { margin-top: 6px; }
.channel-cols { display: grid; grid-template-columns: 103px 109px; gap: 10px; padding: 0 10px 6px 9px; }
.channel-left { padding-top: 3px; }
.channel-left .combo { margin: 0 1px 9px; }
.selected select { background: #3399ff; color: #fff; margin-right: 14px; outline: 1px dotted #c60; outline-offset: -1px; width: auto; }
.coupling { --pad: 8px; padding: 5px var(--pad) 6px; }
.coupling button { flex: 1; }
.onrow { display: flex; justify-content: space-between; margin: 4px 9px 0; font-weight: bold; }
.onrow button { width: 34px; }
.vertical { --pad: 11px; margin-top: -4px; padding: 2px 9px 7px var(--pad); }
.scope-body .auto { width: 100%; height: 23px; margin-top: 7px; font-weight: bold; }
```
